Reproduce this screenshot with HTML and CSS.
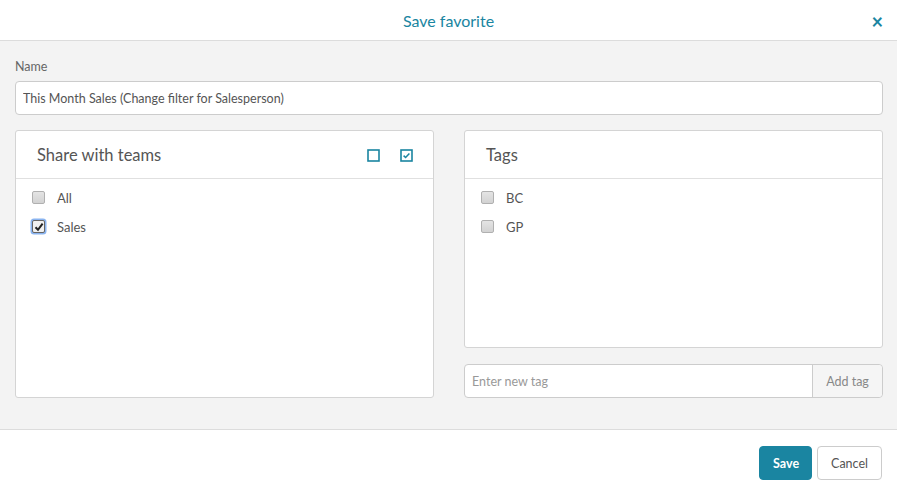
FILE: index.html
```html
<!DOCTYPE html>
<html lang="en">
<head>
    <meta charset="UTF-8">
    <title>Save favorite</title>
    <link rel="stylesheet" href="styles.css">
</head>
<body>
    <div class="modal">
        <div class="modal-header">
            <h1>Save favorite</h1>
            <span class="close">&times;</span>
        </div>

        <div class="modal-body">
            <label class="field-label">Name</label>
            <input class="text-input" type="text" value="This Month Sales (Change filter for Salesperson)">

            <div class="columns">
                <!-- teams -->
                <div class="panel panel-teams">
                    <div class="panel-head">
                        <span>Share with teams</span>
                        <div class="head-tools">
                            <svg width="13" height="13" viewBox="0 0 13 13"><rect x="1" y="1" width="11" height="11" fill="none" stroke="#1a85a1" stroke-width="1.6"/></svg>
                            <svg width="13" height="13" viewBox="0 0 13 13"><rect x="1" y="1" width="11" height="11" fill="none" stroke="#1a85a1" stroke-width="1.6"/><path d="M3.6 6.6 L5.6 8.5 L9.4 4.4" fill="none" stroke="#1a85a1" stroke-width="1.5"/></svg>
                        </div>
                    </div>
                    <ul class="check-list">
                        <li><span class="box"></span>All</li>
                        <li><span class="box checked"><svg width="10" height="10" viewBox="0 0 10 10"><path d="M1.5 5.2 L4 7.8 L8.6 1.6" fill="none" stroke="#222" stroke-width="2"/></svg></span>Sales</li>
                    </ul>
                </div>

                <!-- tags -->
                <div class="tags-col">
                    <div class="panel panel-tags">
                        <div class="panel-head"><span>Tags</span></div>
                        <ul class="check-list">
                            <li><span class="box"></span>BC</li>
                            <li><span class="box"></span>GP</li>
                        </ul>
                    </div>
                    <div class="tag-input">
                        <input type="text" placeholder="Enter new tag">
                        <span class="addon">Add tag</span>
                    </div>
                </div>
            </div>
        </div>

        <div class="modal-footer">
            <button class="btn btn-primary">Save</button>
            <button class="btn">Cancel</button>
        </div>
    </div>
</body>
</html>
```

FILE: styles.css
```css
body {
    margin: 0;
    font-family: Lato, "Open Sans", sans-serif;
    color: #555;
    background: #fff;
}

.modal {
    width: 897px;
    height: 494px;
    display: flex;
    flex-direction: column;
}

.modal-header {
    height: 40px;
    border-bottom: 1px solid #dcdcdc;
    display: flex;
    align-items: center;
    justify-content: center;
    position: relative;
}

.modal-header h1 {
    margin: 0;
    font-size: 16px;
    font-weight: normal;
    color: #1a85a1;
}

.close {
    position: absolute;
    right: 14px;
    top: 9px;
    font-size: 20px;
    font-weight: bold;
    color: #1a85a1;
}

.modal-body {
    background: #f3f3f3;
    height: 389px;
    padding: 18px 14px 0 15px;
    box-sizing: border-box;
    border-bottom: 1px solid #dcdcdc;
}

.field-label {
    display: block;
    font-size: 12.5px;
    color: #666;
    margin-bottom: 7px;
}

.text-input {
    width: 100%;
    box-sizing: border-box;
    height: 34px;
    border: 1px solid #ccc;
    border-radius: 4px;
    padding: 0 7px;
    font-family: inherit;
    font-size: 12.5px;
    color: #555;
    background: #fff;
}

.columns {
    display: flex;
    gap: 30px;
    margin-top: 15px;
}

.panel {
    background: #fff;
    border: 1px solid #d4d4d4;
    border-radius: 3px;
    box-sizing: border-box;
}

.panel-teams {
    width: 419px;
    height: 268px;
}

.tags-col {
    width: 419px;
    display: flex;
    flex-direction: column;
    gap: 16px;
}

.panel-tags {
    height: 218px;
}

.panel-head {
    height: 47px;
    border-bottom: 1px solid #e0e0e0;
    display: flex;
    align-items: center;
    justify-content: space-between;
    padding: 0 20px 0 21px;
    font-size: 16.5px;
    color: #555;
}

.head-tools {
    display: flex;
    gap: 20px;
    padding-top: 2px;
}

.check-list {
    list-style: none;
    margin: 0;
    padding: 4px 0 0 16px;
}

.check-list li {
    height: 29px;
    display: flex;
    align-items: center;
    font-size: 13px;
    color: #555;
}

.box {
    width: 11px;
    height: 11px;
    border: 1px solid #b0b0b0;
    border-radius: 2px;
    background: linear-gradient(#e4e4e4, #d2d2d2);
    margin-right: 12px;
    display: flex;
    align-items: center;
    justify-content: center;
}

.box.checked {
    background: #f0f0f0;
    border-color: #666;
    box-shadow: 0 0 0 1.5px #8ab4f0;
}

.tag-input {
    display: flex;
    height: 34px;
    border: 1px solid #ccc;
    border-radius: 4px;
    background: #fff;
    box-sizing: border-box;
}

.tag-input input {
    flex: 1;
    border: none;
    background: transparent;
    padding: 0 7px;
    font-family: inherit;
    font-size: 12.5px;
    outline: none;
}

.tag-input input::placeholder {
    color: #999;
}

.addon {
    width: 69px;
    border-left: 1px solid #ccc;
    background: #f5f5f5;
    border-radius: 0 4px 4px 0;
    display: flex;
    align-items: center;
    justify-content: center;
    font-size: 12.5px;
    color: #888;
}

.modal-footer {
    flex: 1;
    display: flex;
    justify-content: flex-end;
    align-items: flex-start;
    gap: 5px;
    padding: 16px 15px 0 0;
}

.btn {
    height: 34px;
    padding: 0 13px;
    border: 1px solid #ccc;
    border-radius: 4px;
    background: #fff;
    font-family: inherit;
    font-size: 12.5px;
    color: #555;
}

.btn-primary {
    background: #1a85a1;
    border-color: #1a85a1;
    color: #fff;
    font-weight: bold;
    width: 53px;
}
```
